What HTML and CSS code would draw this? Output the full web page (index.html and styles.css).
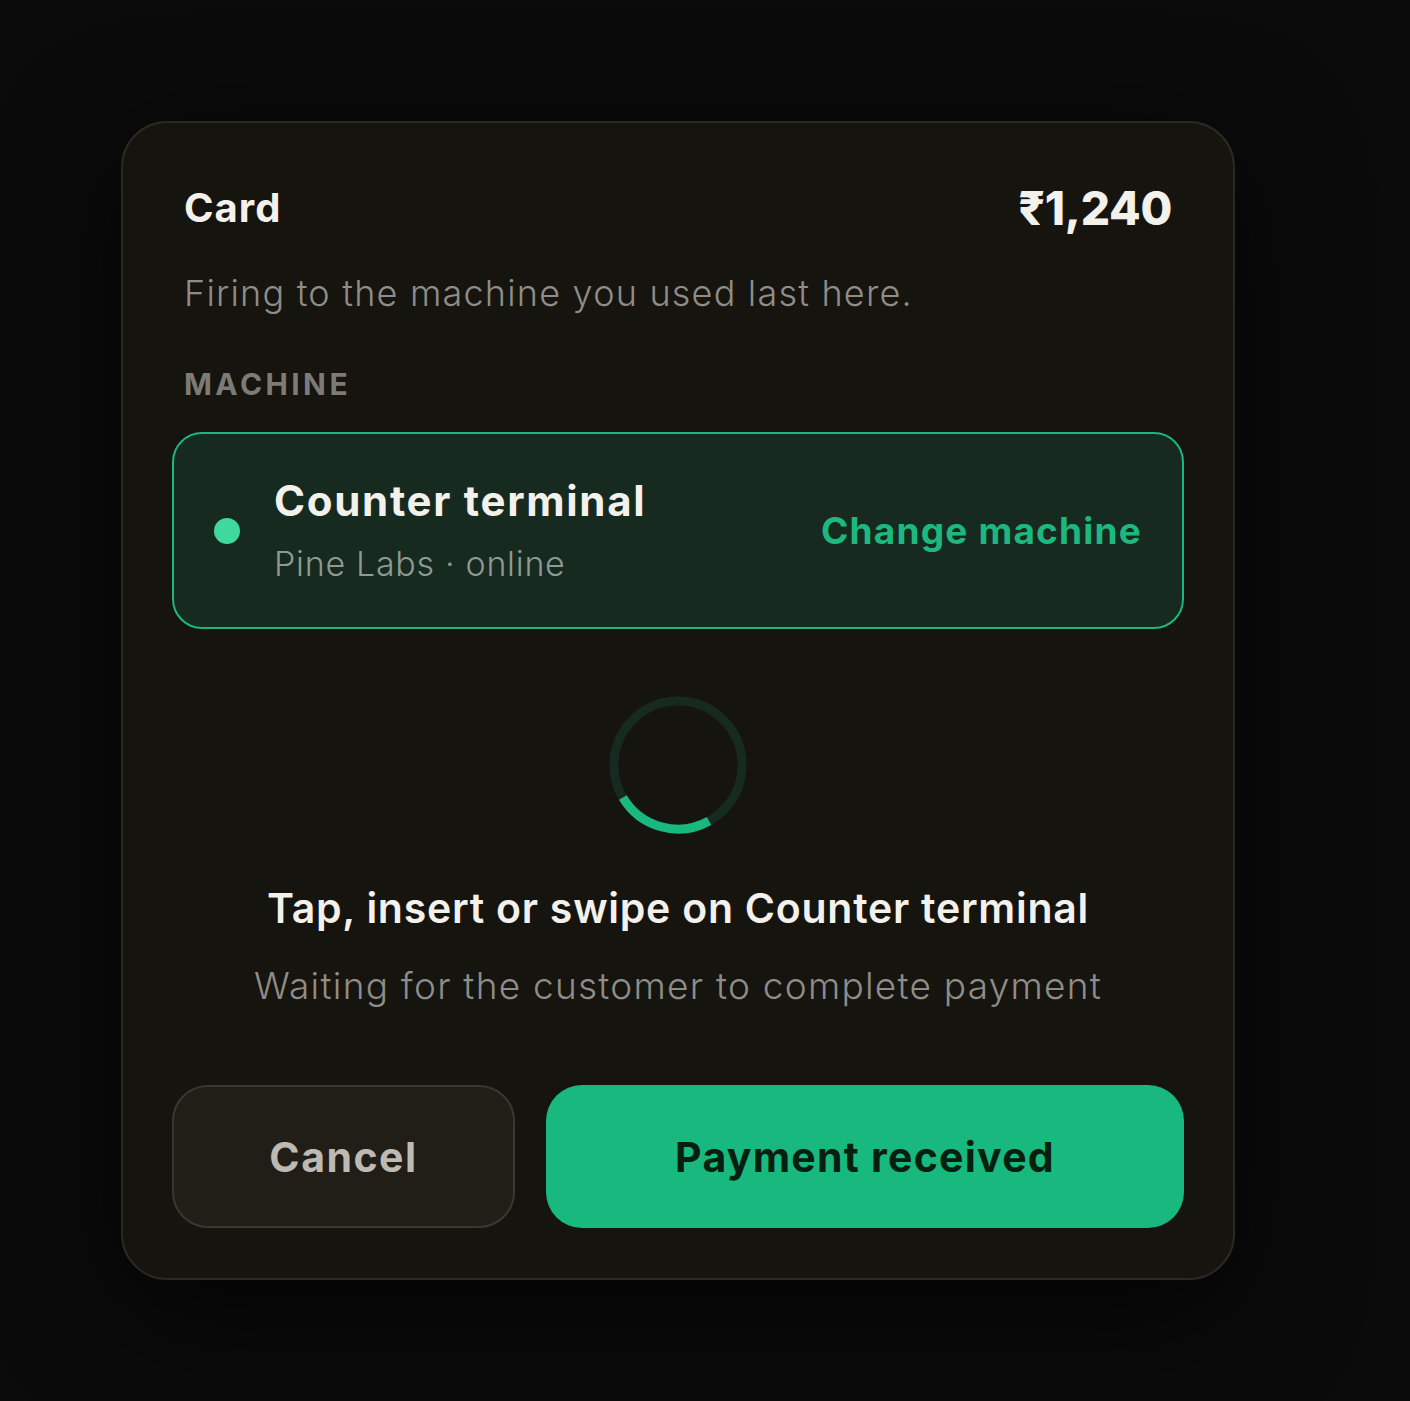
FILE: index.html
```html
<!DOCTYPE html>
<html lang="en">
<head>
<meta charset="utf-8">
<title>Card payment</title>
<link rel="stylesheet" href="styles.css">
</head>
<body>
<div class="card">
  <div class="intro">
    <div class="header">
      <span class="title">Card</span>
      <span class="amount">₹1,240</span>
    </div>
    <p class="note">Firing to the machine you used last here.</p>
    <div class="label">MACHINE</div>
  </div>
  <div class="machine">
    <span class="dot"></span>
    <div class="machine-info">
      <div class="machine-name">Counter terminal</div>
      <div class="machine-sub">Pine Labs · online</div>
    </div>
    <span class="change">Change machine</span>
  </div>
  <div class="spinner">
    <svg width="140" height="140" viewBox="0 0 140 140">
      <circle cx="70" cy="70" r="64" fill="none" stroke="#172a20" stroke-width="9"/>
      <path d="M101.03 125.98 A64 64 0 0 1 14.86 102.48" fill="none" stroke="#19b87f" stroke-width="9"/>
    </svg>
  </div>
  <div class="status">Tap, insert or swipe on Counter terminal</div>
  <div class="waiting">Waiting for the customer to complete payment</div>
  <div class="actions">
    <button class="btn btn-cancel">Cancel</button>
    <button class="btn btn-primary">Payment received</button>
  </div>
</div>
</body>
</html>
```
FILE: styles.css
```css
* { box-sizing: border-box; }
html, body { margin: 0; padding: 0; }
body {
  background: #0b0b0b;
  font-family: "Inter", "Open Sans", sans-serif;
  min-height: 1401px;
  padding: 121px 0 0 121px;
}
.card {
  width: 1114px;
  height: 1159px;
  background: #16140f;
  border: 2px solid #2b2923;
  border-radius: 46px;
  padding: 49px 49px 49px 49px;
  box-shadow: 0 30px 120px rgba(0,0,0,0.75);
  display: flex;
  flex-direction: column;
}
.intro { padding: 0 12px; }
.header {
  display: flex;
  justify-content: space-between;
  align-items: center;
  height: 72px;
}
.title {
  color: #f3f1ec;
  font-weight: 700;
  font-size: 40px;
  letter-spacing: 1px;
  line-height: 72px;
}
.amount {
  color: #f3f1ec;
  font-weight: 800;
  font-size: 46px;
  letter-spacing: -0.3px;
  line-height: 72px;
}
.note {
  margin: 24px 0 0;
  color: #8f8d88;
  font-weight: 300;
  font-size: 36px;
  letter-spacing: 1.2px;
  line-height: 50px;
}
.label {
  margin-top: 46px;
  color: #7d7b76;
  font-weight: 700;
  font-size: 30px;
  letter-spacing: 3.4px;
  line-height: 40px;
}
.machine {
  margin-top: 28px;
  height: 197px;
  border: 2px solid #1db67e;
  background: #172a20;
  border-radius: 30px;
  padding: 0 40px;
  display: flex;
  align-items: center;
}
.dot {
  width: 26px;
  height: 26px;
  border-radius: 50%;
  background: #3fd89d;
  flex: none;
}
.machine-info {
  margin-left: 34px;
  margin-top: 4px;
  flex: 1;
  display: flex;
  flex-direction: column;
  gap: 13px;
}
.machine-name {
  color: #f3f1ec;
  font-weight: 700;
  font-size: 42px;
  letter-spacing: 1.7px;
  line-height: 50px;
}
.machine-sub {
  color: #8e9a92;
  font-weight: 300;
  font-size: 34px;
  letter-spacing: 0.7px;
  line-height: 50px;
}
.change {
  color: #1db87f;
  font-weight: 700;
  font-size: 37px;
  letter-spacing: 1.2px;
  line-height: 50px;
}
.spinner {
  margin-top: 66px;
  display: flex;
  justify-content: center;
  height: 140px;
}
.status {
  margin-top: 45px;
  text-align: center;
  color: #f3f1ec;
  font-weight: 600;
  font-size: 41px;
  letter-spacing: 0.75px;
  line-height: 56px;
}
.waiting {
  margin-top: 25px;
  text-align: center;
  color: #8f8d88;
  font-weight: 300;
  font-size: 37px;
  letter-spacing: 1.25px;
  line-height: 50px;
}
.actions {
  margin-top: 74px;
  display: grid;
  grid-template-columns: 343px 1fr;
  gap: 31px;
}
.btn {
  height: 143px;
  border-radius: 36px;
  font-family: inherit;
  font-weight: 700;
  cursor: pointer;
}
.btn-cancel {
  background: #211e18;
  border: 2px solid #3a3730;
  color: #bdbab4;
  font-size: 41px;
  letter-spacing: 1.5px;
}
.btn-primary {
  background: #19b87f;
  border: none;
  color: #06200f;
  font-size: 41px;
  letter-spacing: 1.25px;
}
```
